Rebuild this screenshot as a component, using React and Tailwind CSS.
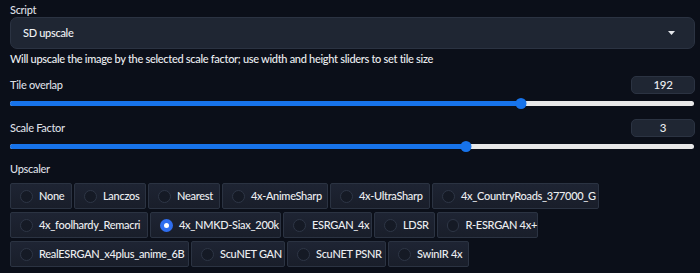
import React from 'react';

// [name, width]
const upscalers = [
  [['None', 62], ['Lanczos', 72], ['Nearest', 72], ['4x-AnimeSharp', 106], ['4x-UltraSharp', 100], ['4x_CountryRoads_377000_G', 167]],
  [['4x_foolhardy_Remacri', 138], ['4x_NMKD-Siax_200k', 131], ['ESRGAN_4x', 89], ['LDSR', 61], ['R-ESRGAN 4x+', 101]],
  [['RealESRGAN_x4plus_anime_6B', 179], ['ScuNET GAN', 94], ['ScuNET PSNR', 99], ['SwinIR 4x', 81]],
];

const Slider = ({ pct }) => (
  <div className="relative h-[10px] flex items-center mr-[1px]">
    <div className="w-full h-[5px] rounded-full bg-[#e8e8e8]">
      <div className="h-full rounded-full bg-[#1773ea]" style={{ width: `${pct}%` }} />
    </div>
    <div
      className="absolute w-[11px] h-[11px] rounded-full bg-[#1773ea] -translate-x-1/2"
      style={{ left: `${pct}%` }}
    />
  </div>
);

const SliderRow = ({ label, value, pct, className }) => (
  <div className={className}>
    <div className="flex items-center justify-between h-[18px]">
      <span className="text-[11px] text-[#dcdfe3]">{label}</span>
      <div className="w-[64px] h-[18px] rounded-[5px] bg-[#1f2633] border border-[#2b3342] flex items-center justify-center text-[11.5px] text-[#eceef1]">
        {value}
      </div>
    </div>
    <div className="mt-[4px]">
      <Slider pct={pct} />
    </div>
  </div>
);

export default function App() {
  return (
    <div
      className="w-[700px] h-[273px] bg-[#0b0f19] pl-[10px] pr-[5px] pt-[2px] overflow-hidden text-[#e5e7eb] font-medium tracking-[-0.3px]"
      style={{ fontFamily: 'Lato, sans-serif' }}
    >
      {/* Script */}
      <div className="text-[11px] text-[#dcdfe3] h-[15px] leading-[15px]">Script</div>
      <div className="h-[32px] rounded-[7px] bg-[#1f2633] border border-[#2b3342] flex items-center justify-between pl-[12px] pr-[19px]">
        <span className="text-[11px] text-[#f0f2f5]">SD upscale</span>
        <svg width="7" height="4" viewBox="0 0 7 4">
          <path d="M0 0h7L3.5 4z" fill="#e5e7eb" />
        </svg>
      </div>
      <div className="text-[11px] h-[20px] leading-[20px] text-[#eceef1] whitespace-nowrap">
        Will upscale the image by the selected scale factor; use width and height sliders to set tile size
      </div>

      <SliderRow className="mt-[7px]" label="Tile overlap" value="192" pct={74.7} />
      <SliderRow className="mt-[11px]" label="Scale Factor" value="3" pct={66.7} />

      {/* Upscaler */}
      <div className="mt-[10px] text-[11px] text-[#dcdfe3] h-[16px] leading-[16px]">Upscaler</div>
      <div className="mt-[6px] flex flex-col gap-[3px]">
        {upscalers.map((row, i) => (
          <div key={i} className="flex gap-[2px]">
            {row.map(([name, w]) => {
              const checked = name === '4x_NMKD-Siax_200k';
              return (
                <div
                  key={name}
                  className="h-[26px] shrink-0 flex items-center gap-[6px] pl-[9px] bg-gradient-to-b from-[#1e2433] to-[#191e2a] border border-[#2b3342] rounded-[2px]"
                  style={{ width: w }}
                >
                  {checked ? (
                    <span className="w-[13px] h-[13px] rounded-full bg-[#2f6ef0] flex items-center justify-center">
                      <span className="w-[5px] h-[5px] rounded-full bg-white" />
                    </span>
                  ) : (
                    <span className="w-[13px] h-[13px] rounded-full bg-[#151a25] border border-[#2e3646]" />
                  )}
                  <span className="text-[11px] text-[#eceef1] whitespace-nowrap">{name}</span>
                </div>
              );
            })}
          </div>
        ))}
      </div>
    </div>
  );
}
